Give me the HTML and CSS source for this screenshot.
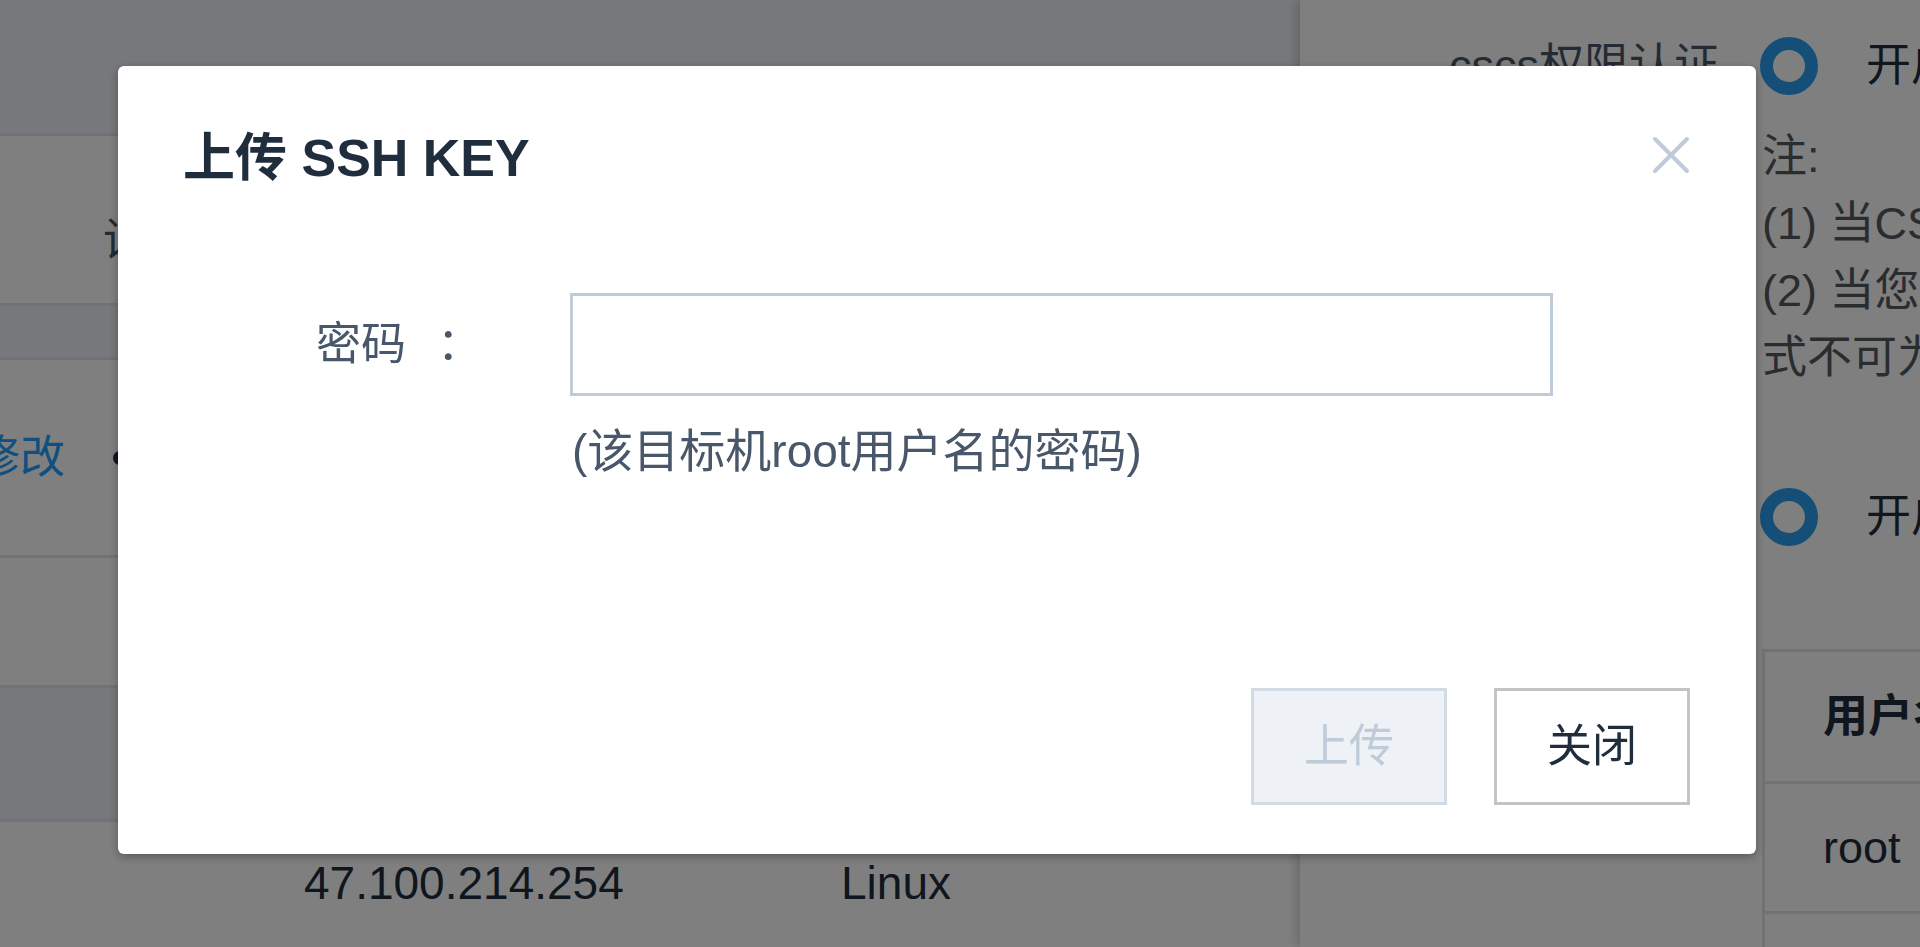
FILE: index.html
```html
<!DOCTYPE html>
<html lang="zh-CN">
<head>
<meta charset="utf-8">
<title>上传 SSH KEY</title>
<link rel="stylesheet" href="styles.css">
</head>
<body>
<div class="page">
  <div class="main">
    <div class="row r1"></div>
    <div class="row r2"><span class="cell-text r2-text">设置</span></div>
    <div class="row r3"></div>
    <div class="row r4"><a class="link">修改</a><span class="dot"></span></div>
    <div class="row r5"></div>
    <div class="row r6"></div>
    <div class="row r7"><span class="cell-ip">47.100.214.254</span><span class="cell-os">Linux</span></div>
  </div>
  <div class="side">
    <div class="radio-row">
      <span class="radio-label">cscs权限认证</span>
      <span class="radio"></span>
      <span class="radio-text">开启</span>
    </div>
    <div class="notes">
      <div>注:</div>
      <div>(1) 当CSCS权限认证开启时，需要设置用户名</div>
      <div>(2) 当您的认证方式为密码时，密码方</div>
      <div>式不可为空。</div>
    </div>
    <div class="radio-row second">
      <span class="radio-label"></span>
      <span class="radio"></span>
      <span class="radio-text">开启</span>
    </div>
    <div class="table">
      <div class="tr th">用户名称</div>
      <div class="tr">root</div>
      <div class="tr"></div>
    </div>
  </div>
</div>

<div class="overlay">
  <div class="dialog">
    <div class="dlg-head">
      <h2 class="dlg-title">上传 SSH KEY</h2>
      <svg class="dlg-close" viewBox="0 0 38 38" aria-label="关闭">
        <line x1="3" y1="3" x2="35" y2="35"/>
        <line x1="35" y1="3" x2="3" y2="35"/>
      </svg>
    </div>
    <div class="dlg-body">
      <div class="form-row">
        <label class="form-label"><span>密码</span><span class="colon">：</span></label>
        <input class="input" type="password">
      </div>
      <div class="hint">(该目标机root用户名的密码)</div>
    </div>
    <div class="dlg-foot">
      <button class="btn btn-disabled" type="button">上传</button>
      <button class="btn" type="button">关闭</button>
    </div>
  </div>
</div>
</body>
</html>
```
FILE: styles.css
```css
* { box-sizing: border-box; }
html, body { margin: 0; height: 100%; }
body {
  font-family: "Liberation Sans", "Noto Sans CJK SC", sans-serif;
  font-size: 45px;
  line-height: 45px;
  color: #1f2d3d;
  background: #fff;
  overflow: hidden;
}

.page { display: flex; width: 1920px; height: 947px; }
.main { width: 1300px; flex: none; overflow: hidden; }
.side {
  flex: 1;
  position: relative;
  background: #fff;
  box-shadow: -4px 0 10px rgba(0, 0, 0, 0.16);
  overflow: hidden;
  padding-top: 32px;
}

/* main rows */
.row { display: flex; align-items: flex-start; border-bottom: 3px solid #dfe6ec; white-space: nowrap; }
.r1 { height: 136px; background: #eef1f6; }
.r2 { height: 170px; padding-top: 82px; }
.r3 { height: 54px; background: #eef1f6; }
.r4 { height: 198px; padding-top: 75px; }
.r5 { height: 130px; }
.r6 { height: 134px; background: #eef1f6; }
.r7 { border-bottom: none; padding-top: 39px; font-size: 46px; }
.r2-text { margin-left: 103px; color: #48576a; }
.link { margin-left: -25px; color: #20a0ff; }
.dot { width: 14px; height: 14px; border-radius: 50%; background: #1f2d3d; margin: 16px 0 0 48px; }
.cell-ip { width: 841px; padding-left: 304px; }

/* side panel */
.radio-row { display: flex; align-items: center; height: 67px; white-space: nowrap; }
.radio-label { width: 460px; flex: none; text-align: right; padding-right: 41px; color: #48576a; }
.radio { width: 58px; height: 58px; flex: none; border-radius: 50%; border: 13px solid #2a9ff0; background: #fff; }
.radio-text { margin-left: 48px; color: #1f2d3d; }
.notes { margin: 24px 0 0 462px; line-height: 67px; color: #555a60; white-space: nowrap; }
.radio-row.second { margin-top: 92px; }
.table { margin: 99px 0 0 462px; border-top: 3px solid #dfe6ec; border-left: 3px solid #dfe6ec; }
.tr { display: flex; align-items: center; height: 130px; padding-left: 58px; border-bottom: 3px solid #dfe6ec; white-space: nowrap; }
.tr.th { height: 132px; font-weight: bold; }

/* dialog */
.overlay { position: fixed; inset: 0; background: rgba(0, 0, 0, 0.5); }
.dialog {
  position: absolute;
  left: 118px;
  top: 66px;
  width: 1638px;
  height: 788px;
  background: #fff;
  border-radius: 6px;
  box-shadow: 0 3px 10px rgba(0, 0, 0, 0.3);
  display: flex;
  flex-direction: column;
}
.dlg-head { display: flex; justify-content: space-between; align-items: flex-start; padding: 66px 66px 0 65px; }
.dlg-title { margin: 0; font-size: 52px; line-height: 52px; font-weight: bold; color: #1f2d3d; }
.dlg-close { width: 38px; height: 38px; margin-top: 4px; }
.dlg-close line { stroke: #bfcbd9; stroke-width: 4; stroke-linecap: round; }

.dlg-body { padding: 109px 0 0 65px; }
.form-row { display: flex; align-items: center; }
.form-label { width: 387px; flex: none; display: flex; padding-left: 133px; color: #48576a; }
.colon { margin-left: 31px; }
.input {
  width: 983px;
  height: 103px;
  border: 3px solid #bfcbd9;
  border-radius: 0;
  padding: 0 20px;
  font: inherit;
  outline: none;
  background: #fff;
}
.hint { margin: 33px 0 0 389px; color: #48576a; font-size: 46px; }

.dlg-foot { margin-top: auto; display: flex; justify-content: flex-end; gap: 47px; padding: 0 66px 49px 0; }
.btn {
  font: inherit;
  font-size: 45px;
  line-height: 45px;
  padding: 33px 50px;
  border: 3px solid #c4c4c4;
  border-radius: 0;
  background: #fff;
  color: #1f2d3d;
}
.btn-disabled { background: #eef1f6; border-color: #d1dbe5; color: #bfcbd9; }
```
